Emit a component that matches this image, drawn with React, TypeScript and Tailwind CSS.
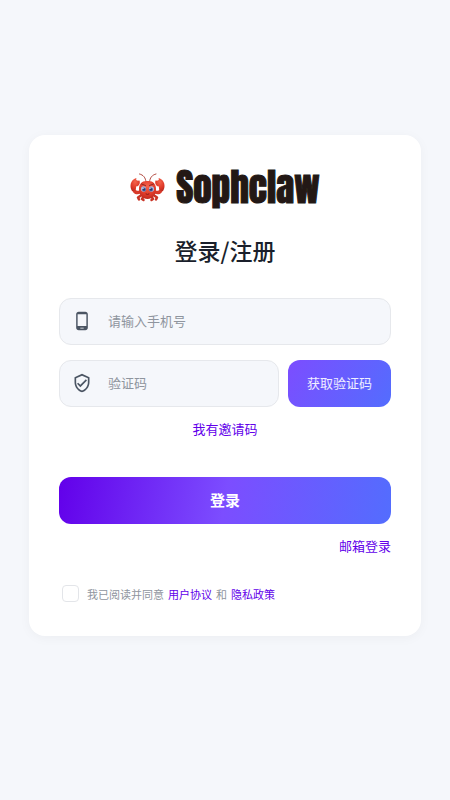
import { useState } from "react";
import type { ReactNode } from "react";

const CrabLogo = () => (
  <svg viewBox="0 0 70 60" className="h-[30px] w-[35px]" aria-hidden="true">
    <defs>
      <radialGradient id="shell" cx="50%" cy="30%" r="75%">
        <stop offset="0" stopColor="#f4644c" />
        <stop offset="0.6" stopColor="#e03b2a" />
        <stop offset="1" stopColor="#b8271d" />
      </radialGradient>
    </defs>
    {/* antennae */}
    <path d="M32 20C31 11 27 6 19 4M39 20C40 11 44 6 52 4" fill="none" stroke="#a8352b" strokeWidth="1.8" strokeLinecap="round" />
    {/* legs */}
    <path d="M23 46L16 51L18 55M28 48L24 54L27 56M47 46L54 51L52 55M42 48L46 54L43 56" fill="none" stroke="#c93325" strokeWidth="5" strokeLinecap="round" strokeLinejoin="round" />
    {/* arms */}
    <path d="M20 40C13 43 8 40 7 33M50 40C57 43 62 40 63 33" fill="none" stroke="#d83a2a" strokeWidth="7" strokeLinecap="round" />
    {/* claws */}
    <path d="M4 38C-2 29 1 15 13 12C11 16 13 18 19 17C21 24 18 29 12 29C13 34 10 39 4 38Z" fill="url(#shell)" />
    <path d="M66 38C72 29 69 15 57 12C59 16 57 18 51 17C49 24 52 29 58 29C57 34 60 39 66 38Z" fill="url(#shell)" />
    <path d="M35 18C46 17 52 24 52 34C52 46 45 54 35 54C25 54 18 46 18 34C18 24 24 17 35 18Z" fill="url(#shell)" />
    <path d="M23 24L31 27M47 24L39 27" stroke="#8f2724" strokeWidth="2" strokeLinecap="round" />
    <ellipse cx="27" cy="34" rx="5" ry="5.5" fill="#aebde0" />
    <ellipse cx="43" cy="34" rx="5" ry="5.5" fill="#aebde0" />
    <circle cx="28" cy="35" r="4" fill="#4b5f9c" />
    <circle cx="42" cy="35" r="4" fill="#4b5f9c" />
    <circle cx="28" cy="35" r="1.8" fill="#27335e" />
    <circle cx="42" cy="35" r="1.8" fill="#27335e" />
    <circle cx="26" cy="33" r="1.2" fill="#fff" />
    <circle cx="40" cy="33" r="1.2" fill="#fff" />
    <path d="M32 44Q35 46 38 44" fill="none" stroke="#841b17" strokeWidth="2" strokeLinecap="round" />
  </svg>
);

const PhoneIcon = () => (
  <svg viewBox="0 0 24 24" className="size-5 shrink-0" fill="#4b5563" aria-hidden="true">
    <path d="M16 1H8C6.34 1 5 2.34 5 4v16c0 1.66 1.34 3 3 3h8c1.66 0 3-1.34 3-3V4c0-1.66-1.34-3-3-3zm-2 20h-4v-1h4v1zm3.25-3H6.75V4h10.5v14z" />
  </svg>
);

const ShieldIcon = () => (
  <svg viewBox="0 0 24 24" className="size-5 shrink-0" fill="#4b5563" aria-hidden="true">
    <path d="M12 1L3 5v6c0 5.55 3.84 10.74 9 12 5.16-1.26 9-6.45 9-12V5l-9-4zm7 10c0 4.52-2.98 8.69-7 9.93-4.02-1.24-7-5.41-7-9.93V6.3l7-3.11 7 3.11V11zM7.41 11.59L6 13l4 4 8-8-1.41-1.42L10 14.17z" />
  </svg>
);

type FieldProps = {
  icon: ReactNode;
  label: string;
  type: string;
  value: string;
  onChange: (value: string) => void;
};

const Field = ({ icon, label, type, value, onChange }: FieldProps) => (
  <label className="flex h-[47px] min-w-0 flex-1 items-center gap-4 rounded-xl border border-[#e6e8ec] bg-[#f5f7fb] px-3">
    {icon}
    <input
      type={type}
      aria-label={label}
      placeholder={label}
      value={value}
      onChange={(e) => onChange(e.target.value)}
      className="w-full min-w-0 bg-transparent text-[13px] leading-5 text-[#1a1f2b] outline-none placeholder:text-[#8f959e]"
    />
  </label>
);

export default function App() {
  const [phone, setPhone] = useState("");
  const [code, setCode] = useState("");
  const [agreed, setAgreed] = useState(false);

  return (
    <main className="flex min-h-screen items-center justify-center bg-[#f5f7fb] px-[29px] pb-[30px] font-['Noto_Sans_CJK_SC',sans-serif]">
      <form
        onSubmit={(e) => e.preventDefault()}
        className="flex w-full max-w-md flex-col rounded-2xl bg-white px-[30px] py-8 shadow-[0_2px_12px_rgba(0,0,0,0.04)]"
      >
        <div className="flex h-10 items-center justify-center gap-[11px]">
          <CrabLogo />
          <span className="font-['Impact','Anton','Liberation_Sans',sans-serif] text-[37px] font-normal leading-10 text-[#231815] [-webkit-text-stroke:1px_#231815]">
            Sophclaw
          </span>
        </div>

        <h1 className="mt-[27px] text-center text-[23px] font-medium leading-8 text-[#1a1f2b]">登录/注册</h1>

        <div className="mt-8 flex">
          <Field icon={<PhoneIcon />} label="请输入手机号" type="tel" value={phone} onChange={setPhone} />
        </div>

        <div className="mt-[15px] flex gap-[9px]">
          <Field icon={<ShieldIcon />} label="验证码" type="text" value={code} onChange={setCode} />
          <button
            type="button"
            className="h-[47px] w-[103px] shrink-0 rounded-xl bg-linear-[120deg,#7c4dff,#536dfe] text-[13px] text-white/90"
          >
            获取验证码
          </button>
        </div>

        <a href="#invite" className="mt-3 self-center text-[13px] leading-5 text-[#6200ea]">
          我有邀请码
        </a>

        <button
          type="submit"
          className="mt-[38px] h-[47px] rounded-xl bg-linear-[100deg,#6200ea,#7c4dff_50%,#536dfe] text-[15px] font-bold text-white"
        >
          登录
        </button>

        <a href="#email" className="mt-3 self-end text-[13px] leading-5 text-[#6200ea]">
          邮箱登录
        </a>

        <div className="mt-7 flex items-center gap-2 pl-[3px] text-[11px] leading-5 text-[#8f959e]">
          <input
            id="agree"
            type="checkbox"
            checked={agreed}
            onChange={(e) => setAgreed(e.target.checked)}
            className="size-[17px] shrink-0 appearance-none rounded-sm border border-[#e3e5e9] bg-white checked:bg-[#6200ea]"
          />
          <p className="flex gap-1">
            <label htmlFor="agree">我已阅读并同意</label>
            <a href="#terms" className="text-[#6200ea]">用户协议</a>
            <span>和</span>
            <a href="#privacy" className="text-[#6200ea]">隐私政策</a>
          </p>
        </div>
      </form>
    </main>
  );
}
